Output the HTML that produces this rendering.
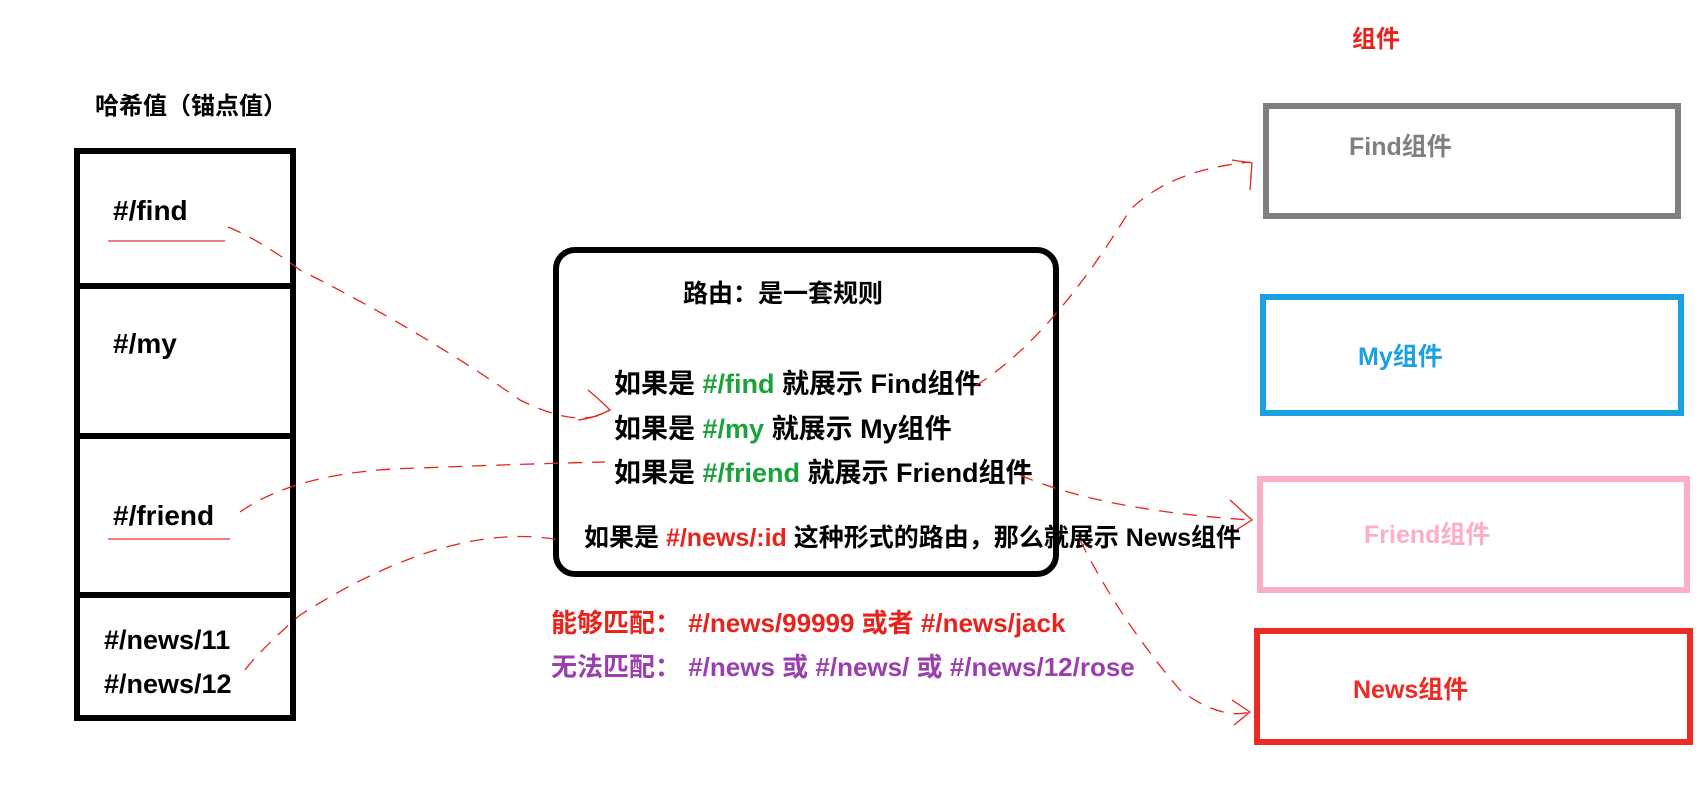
<!DOCTYPE html>
<html><head><meta charset="utf-8"><style>
body{margin:0;width:1700px;height:786px;background:#fff;position:relative;overflow:hidden;font-family:"Liberation Sans","Noto Sans CJK SC",sans-serif;font-weight:bold;}
.t{position:absolute;white-space:nowrap;font-size:26px;line-height:1;color:#000;}
.box{position:absolute;box-sizing:border-box;}
.g{color:#1aa33a}.r{color:#e8231c}.p{color:#9b3fae}
</style></head><body>
<div class="t r" style="left:1352px;top:28px;font-size:24px">组件</div>
<div class="t" style="left:95px;top:95px;font-size:24px">哈希值（锚点值）</div>

<div class="box" style="left:74px;top:148px;width:222px;height:573px;border:6px solid #000"></div>
<div class="box" style="left:74px;top:283px;width:222px;height:6px;background:#000"></div>
<div class="box" style="left:74px;top:433px;width:222px;height:6px;background:#000"></div>
<div class="box" style="left:74px;top:592px;width:222px;height:6px;background:#000"></div>
<div class="t" style="left:113px;top:197px;font-size:28px">#/find</div>
<div class="box" style="left:108px;top:240px;width:117px;height:2px;background:#f08080"></div>
<div class="t" style="left:113px;top:330px;font-size:28px">#/my</div>
<div class="t" style="left:113px;top:502px;font-size:28px">#/friend</div>
<div class="box" style="left:108px;top:538px;width:122px;height:2px;background:#f08080"></div>
<div class="t" style="left:104px;top:627px;font-size:27px">#/news/11</div>
<div class="t" style="left:104px;top:671px;font-size:27px">#/news/12</div>

<div class="box" style="left:553px;top:247px;width:506px;height:330px;border:6px solid #000;border-radius:22px"></div>
<div class="t" style="left:683px;top:282px;font-size:25px">路由：是一套规则</div>
<div class="t" style="left:614px;top:371px;font-size:27px">如果是 <span class="g">#/find</span> 就展示 Find组件</div>
<div class="t" style="left:614px;top:416px;font-size:27px">如果是 <span class="g">#/my</span> 就展示 My组件</div>
<div class="t" style="left:614px;top:460px;font-size:27px">如果是 <span class="g">#/friend</span> 就展示 Friend组件</div>
<div class="t" style="left:584px;top:526px;font-size:25px">如果是 <span class="r">#/news/:id</span> 这种形式的路由，那么就展示 News组件</div>
<div class="t r" style="left:551px;top:610px">能够匹配： #/news/99999 或者 #/news/jack</div>
<div class="t p" style="left:551px;top:654px">无法匹配： #/news 或 #/news/ 或 #/news/12/rose</div>

<div class="box" style="left:1263px;top:103px;width:418px;height:116px;border:6px solid #7f7f7f"></div>
<div class="t" style="left:1349px;top:135px;color:#7f7f7f;font-size:25px">Find组件</div>
<div class="box" style="left:1260px;top:294px;width:424px;height:122px;border:6px solid #1ba1e2"></div>
<div class="t" style="left:1358px;top:345px;color:#1ba1e2;font-size:25px">My组件</div>
<div class="box" style="left:1257px;top:476px;width:433px;height:117px;border:6px solid #fcaec8"></div>
<div class="t" style="left:1364px;top:523px;color:#fcaec8;font-size:25px">Friend组件</div>
<div class="box" style="left:1254px;top:628px;width:439px;height:117px;border:6px solid #ee2a24"></div>
<div class="t" style="left:1353px;top:678px;color:#ee2a24;font-size:25px">News组件</div>

<svg width="1700" height="786" style="position:absolute;left:0;top:0" fill="none" stroke="#e8231c" stroke-width="1.3" stroke-dasharray="14 10">
<path d="M228 227 Q260 240 300 270 Q420 330 520 400 Q580 430 610 410"/>
<path d="M588 390 Q600 400 610 410 Q595 418 578 420" stroke-dasharray="none"/>
<path d="M975 386 Q1050 340 1130 210 Q1170 170 1250 162"/>
<path d="M1232 160 L1252 163 L1250 190" stroke-dasharray="none"/>
<path d="M240 512 Q300 470 420 468 Q520 464 605 462"/>
<path d="M1020 475 Q1100 510 1250 520"/>
<path d="M1230 500 L1252 520 L1236 530" stroke-dasharray="none"/>
<path d="M245 670 Q260 650 300 615 Q450 520 560 540"/>
<path d="M1080 540 Q1120 620 1180 690 Q1220 720 1250 712"/>
<path d="M1232 700 L1250 712 L1234 725" stroke-dasharray="none"/>
</svg>
</body></html>
